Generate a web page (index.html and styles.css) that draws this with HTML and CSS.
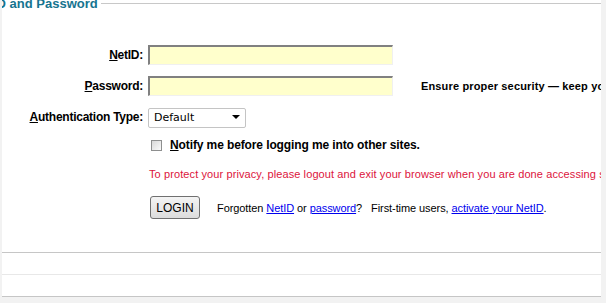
FILE: index.html
```html
<!DOCTYPE html>
<html lang="en">
<head>
  <meta charset="UTF-8" />
  <title>NetID Login</title>
  <link rel="stylesheet" href="styles.css">
</head>
<body>

  <div class="panel">
    <div class="legend">
      <span class="legend-text">NetID and Password</span>
      <span class="legend-rule"></span>
    </div>

    <form class="login-form" onsubmit="return false">
      <label class="field-label" for="netid"><u>N</u>etID:</label>
      <input class="text-input" id="netid" type="text" autofocus>
      <span></span>

      <label class="field-label" for="password"><u>P</u>assword:</label>
      <input class="text-input" id="password" type="password">
      <span class="hint">Ensure proper security — keep your password confidential.</span>

      <label class="field-label" for="authtype"><u>A</u>uthentication Type:</label>
      <span class="select-wrap">
        <select id="authtype" class="auth-select">
          <option>Default</option>
        </select>
      </span>
      <span></span>

      <label class="check-row">
        <input type="checkbox" class="check-box">
        <span><u>N</u>otify me before logging me into other sites.</span>
      </label>

      <p class="privacy">To protect your privacy, please logout and exit your browser when you are done accessing services that require authentication.</p>

      <div class="action-row">
        <button class="login-btn" type="submit">LOGIN</button>
        <span class="help-links">Forgotten <a href="#">NetID</a> or <a href="#">password</a>?&nbsp;&nbsp; First-time users, <a href="#">activate your NetID</a>.</span>
      </div>
    </form>

    <div class="rule rule-dark"></div>
    <div class="rule rule-light"></div>
    <div class="rule rule-dark rule-last"></div>
  </div>

</body>
</html>
```

FILE: styles.css
```css
*, *::before, *::after {
  box-sizing: border-box;
}

body {
  margin: 0;
  background: #f2f2f2;
  font-family: 'Liberation Sans', Arial, sans-serif;
  color: #000;
  min-height: 100vh;
}

.panel {
  margin: 0 5px 0 2px;
  background: #fff;
  overflow: hidden;
}

.legend {
  display: flex;
  align-items: center;
  height: 15px;
  margin-top: -4px;
}

.legend-text {
  margin-left: -30px;
  font-size: 13px;
  line-height: 15px;
  font-weight: bold;
  color: #16748f;
  white-space: nowrap;
}

.legend-rule {
  flex: 1;
  height: 1px;
  margin-left: 3px;
  background: #c8c8c8;
}

.login-form {
  display: grid;
  grid-template-columns: 141px 245px 1fr;
  column-gap: 5px;
  row-gap: 11px;
  align-items: center;
  padding-top: 34px;
  margin: 0;
}

.field-label {
  text-align: right;
  font-size: 12px;
  font-weight: bold;
  letter-spacing: -0.25px;
  white-space: nowrap;
}

.text-input {
  width: 245px;
  height: 20px;
  margin: 0;
  padding: 0 4px;
  background: #ffffcc;
  border-style: solid;
  border-width: 2px 1px 1px 2px;
  border-color: #808080 #f0f0f0 #f0f0f0 #808080;
  font-family: 'Liberation Sans', Arial, sans-serif;
  font-size: 12px;
  outline: none;
}

.hint {
  padding-left: 23px;
  font-size: 11px;
  font-weight: bold;
  letter-spacing: 0.15px;
  white-space: nowrap;
}

.select-wrap {
  position: relative;
  justify-self: start;
  width: 98px;
  height: 20px;
}

.select-wrap::after {
  content: '';
  position: absolute;
  top: 8px;
  right: 6px;
  border-left: 4px solid transparent;
  border-right: 4px solid transparent;
  border-top: 4px solid #000;
  pointer-events: none;
}

.auth-select {
  appearance: none;
  -webkit-appearance: none;
  width: 98px;
  height: 20px;
  margin: 0;
  padding: 0 0 0 5px;
  border: 1px solid #c4c4c4;
  border-radius: 2px;
  background: #fff;
  font-family: 'DejaVu Sans', Verdana, sans-serif;
  font-size: 11px;
  color: #000;
}

.check-row {
  grid-column: 2 / -1;
  display: flex;
  align-items: center;
  gap: 8px;
  margin-top: 1px;
  font-size: 12px;
  line-height: 13px;
  font-weight: bold;
  letter-spacing: -0.11px;
  white-space: nowrap;
}

.check-box {
  appearance: none;
  -webkit-appearance: none;
  width: 11px;
  height: 11px;
  margin: 0 0 0 3px;
  border: 1px solid #8e8f8f;
  background: linear-gradient(135deg, #d8d8d8, #fafafa);
}

.privacy {
  grid-column: 2 / -1;
  margin: 5px 0 0 1px;
  font-size: 11px;
  line-height: 13px;
  letter-spacing: 0.1px;
  color: #dc143c;
  white-space: nowrap;
}

.action-row {
  grid-column: 2 / -1;
  display: flex;
  align-items: center;
  gap: 17px;
  margin-top: 4px;
  white-space: nowrap;
}

.login-btn {
  width: 50px;
  height: 23px;
  margin-left: 2px;
  padding: 0;
  border: 1px solid #707070;
  border-radius: 3px;
  background: linear-gradient(#f4f4f4, #dcdcdc);
  font-family: 'Liberation Sans', Arial, sans-serif;
  font-size: 12px;
  color: #000;
}

.help-links {
  font-size: 11px;
  letter-spacing: -0.08px;
}

.help-links a {
  color: #0000ee;
}

.rule {
  height: 22px;
  border-top: 1px solid #c6c6c6;
}

.rule-dark {
  margin-top: 33px;
}

.rule-light {
  border-top-color: #e8e8e8;
}

.rule-dark.rule-last {
  margin-top: 0;
  height: 1px;
}
```
